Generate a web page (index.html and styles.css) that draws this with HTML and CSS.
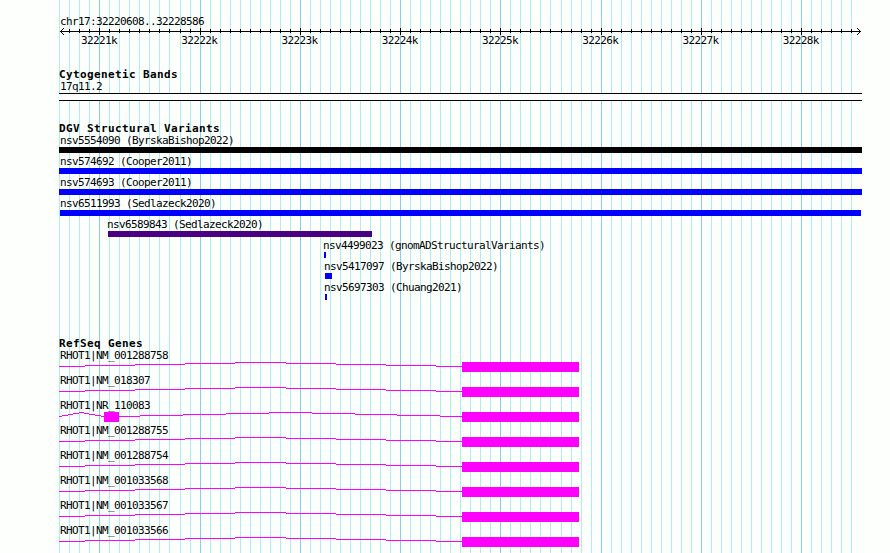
FILE: index.html
```html
<!DOCTYPE html>
<html lang="en">
<head>
<meta charset="utf-8">
<title>chr17:32220608..32228586</title>
<link rel="stylesheet" href="styles.css">
</head>
<body>
<svg class="gridlines" id="gridlines" width="890" height="553" shape-rendering="crispEdges" aria-hidden="true"></svg>
<main class="browser">
  <header class="ruler">
    <div class="label">chr17:32220608..32228586</div>
    <svg class="axis" id="axis" width="803" height="9" shape-rendering="crispEdges" aria-hidden="true"></svg>
    <div class="ticks"><span>32221k</span><span>32222k</span><span>32223k</span><span>32224k</span><span>32225k</span><span>32226k</span><span>32227k</span><span>32228k</span></div>
  </header>
  <section class="cyto">
    <h2>Cytogenetic Bands</h2>
    <div class="label">17q11.2</div>
    <div class="band"></div>
  </section>
  <section class="variants">
    <h2>DGV Structural Variants</h2>
    <div id="variants"></div>
  </section>
  <section class="genes">
    <h2>RefSeq Genes</h2>
    <div id="genes"></div>
  </section>
</main>
<script src="tracks.js"></script>
</body>
</html>
```
FILE: styles.css
```css
* { box-sizing: border-box; }
body {
  margin: 0;
  width: 890px;
  height: 553px;
  overflow: hidden;
  background: #fdfffd;
  color: #000;
  font: 11px/14px "DejaVu Sans Mono", monospace;
}
.gridlines { position: absolute; left: 0; top: 0; }
.minor { fill: #afeeee; }
.major { fill: #87ceeb; }
.browser { position: relative; width: 803px; margin-left: 59px; padding-top: 15px; }
.label, .ticks {
  height: 12px;
  letter-spacing: -0.622px;
  white-space: pre;
}
.label { position: relative; z-index: 1; padding-left: 1px; }
.axis { display: block; }
.ticks { display: flex; gap: 64.27px; padding-left: 22px; margin-top: -2px; }
.ticks span { width: 36px; }
h2 {
  margin: 0;
  height: 12px;
  font-size: 11px;
  line-height: 14px;
  font-weight: bold;
  letter-spacing: 0.378px;
}
.cyto { padding-top: 22px; }
.band {
  height: 8px;
  margin-top: 1px;
  border: solid #000;
  border-width: 1px 0;
  background: #fff;
}
.variants { padding-top: 21px; }
.variant { height: 21px; }
.bar { height: 6px; margin-top: 1px; }
.black { background: #000; }
.blue { background: #00f; }
.indigo { background: #4b0082; }
.genes { padding-top: 35px; }
.gene { height: 25px; }
.gene svg { display: block; margin-top: 1px; fill: #f0f; }
```
FILE: tracks.js
```js
const SVG = "http://www.w3.org/2000/svg";
function rect(parent, x, y, w, h, cls) {
  const r = document.createElementNS(SVG, "rect");
  Object.entries({ x, y, width: w, height: h }).forEach(([k, v]) => r.setAttribute(k, v));
  if (cls) r.setAttribute("class", cls);
  parent.appendChild(r);
}

// Grid and ruler ticks: one per 100 bp, a major one per 1000 bp.
const grid = document.getElementById("gridlines");
const axis = document.getElementById("axis");
rect(axis, 1, 4, 801, 1);
for (let i = -4; i <= 75; i++) {
  const x = Math.floor(99.79 + i * 10.0265);
  const major = i % 10 === 0;
  rect(grid, x, 0, 1, 553, major ? "major" : "minor");
  if (i > -4) rect(axis, x - 59, major ? 1 : 2, 1, major ? 7 : 4);
}
for (let i = 1; i <= 3; i++) {
  for (const s of [-1, 1]) {
    rect(axis, 1 + i, 4 + s * i, 1, 1);
    rect(axis, 801 - i, 4 + s * i, 1, 1);
  }
}

// [name, label x, bar start, bar end, colour]
const variants = [
  ["nsv5554090 (ByrskaBishop2022)", 59, 59, 862, "black"],
  ["nsv574692 (Cooper2011)", 59, 59, 862, "blue"],
  ["nsv574693 (Cooper2011)", 59, 59, 862, "blue"],
  ["nsv6511993 (Sedlazeck2020)", 59, 60, 861, "blue"],
  ["nsv6589843 (Sedlazeck2020)", 106, 108, 372, "indigo"],
  ["nsv4499023 (gnomADStructuralVariants)", 322, 324, 326, "blue"],
  ["nsv5417097 (ByrskaBishop2022)", 323, 325, 332, "blue"],
  ["nsv5697303 (Chuang2021)", 323, 325, 327, "blue"]
];
document.getElementById("variants").innerHTML = variants.map(([name, lx, a, b, c]) =>
  `<div class="variant"><div class="label" style="margin-left:${lx - 59}px">${name}</div>` +
  `<div class="bar ${c}" style="margin-left:${a - 59}px;width:${b - a}px"></div></div>`).join("");

// Introns arch up four pixels and back down, between these x positions.
const heights = [4, 3, 2, 1, 0, 1, 2, 3, 4];
const plain = [[59, 85, 135, 185, 235, 286, 336, 386, 436, 462]];
const split = [[59, 62, 68, 73, 79, 84, 89, 95, 101, 104], [119, 140, 183, 226, 269, 312, 355, 397, 440, 462]];
const genes = ["NM_001288758", "NM_018307", "NR_110083", "NM_001288755", "NM_001288754", "NM_001033568", "NM_001033567", "NM_001033566"];
const host = document.getElementById("genes");
for (const name of genes) {
  const row = document.createElement("div");
  row.className = "gene";
  row.innerHTML = `<div class="label">RHOT1|${name}</div><svg width="803" height="10" shape-rendering="crispEdges"></svg>`;
  const svg = row.querySelector("svg");
  const isSplit = name === "NR_110083";
  for (const xs of isSplit ? split : plain) {
    heights.forEach((y, i) => rect(svg, xs[i] - 59, y, xs[i + 1] - xs[i], 1));
  }
  if (isSplit) rect(svg, 45, 0, 15, 10);
  rect(svg, 403, 0, 117, 10);
  host.appendChild(row);
}
```
